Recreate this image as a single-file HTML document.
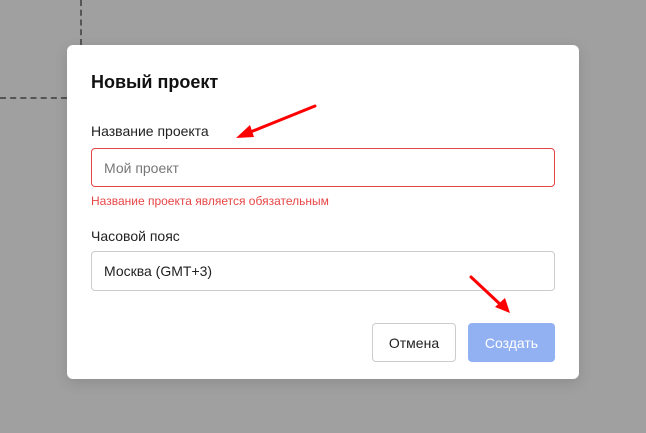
<!DOCTYPE html>
<html><head><meta charset="utf-8"><style>
*{box-sizing:border-box;margin:0;padding:0}
body{width:646px;height:433px;background:#a0a0a0;position:relative;overflow:hidden;font-family:"Liberation Sans",Arial,sans-serif}
.m{position:absolute;left:67px;top:45px;width:512px;height:334px;background:#fff;border-radius:6px;box-shadow:0 4px 14px rgba(0,0,0,.12)}
.a{position:absolute;white-space:nowrap}
.in{position:absolute;left:91px;width:464px;border-radius:4px;font-size:14px;padding-left:12px;display:flex;align-items:center}
.b{position:absolute;top:323px;height:39px;border-radius:4px;display:flex;align-items:center;justify-content:center;font-size:14px}
</style></head><body>
<div class="a" style="left:80px;top:0;height:45px;border-left:2px dashed #555"></div>
<div class="a" style="left:0;top:97px;width:67px;border-top:2px dashed #555"></div>
<div class="m"></div>
<div class="a" style="left:91px;top:72px;font-size:18px;font-weight:bold;color:#111">Новый проект</div>
<div class="a" style="left:91px;top:123px;font-size:14px;color:#222">Название проекта</div>
<div class="in" style="top:148px;height:39px;border:1px solid #e54545;color:#777">Мой проект</div>
<div class="a" style="left:91px;top:194px;font-size:12px;color:#e84646">Название проекта является обязательным</div>
<div class="a" style="left:91px;top:228px;font-size:14px;color:#222">Часовой пояс</div>
<div class="in" style="top:251px;height:40px;border:1px solid #ccc;color:#222">Москва (GMT+3)</div>
<div class="b" style="left:372px;width:84px;border:1px solid #ccc;color:#222">Отмена</div>
<div class="b" style="left:468px;width:87px;background:#92b1f2;color:#fff">Создать</div>
<svg class="a" style="left:0;top:0" width="646" height="433">
<line x1="315" y1="106" x2="248" y2="133" stroke="#f00" stroke-width="3" stroke-linecap="round"/>
<polygon points="236,138 250,125 254,137" fill="#f00"/>
<line x1="471" y1="277" x2="502" y2="306" stroke="#f00" stroke-width="3" stroke-linecap="round"/>
<polygon points="510,313 495,307 505,298" fill="#f00"/>
</svg>
</body></html>
